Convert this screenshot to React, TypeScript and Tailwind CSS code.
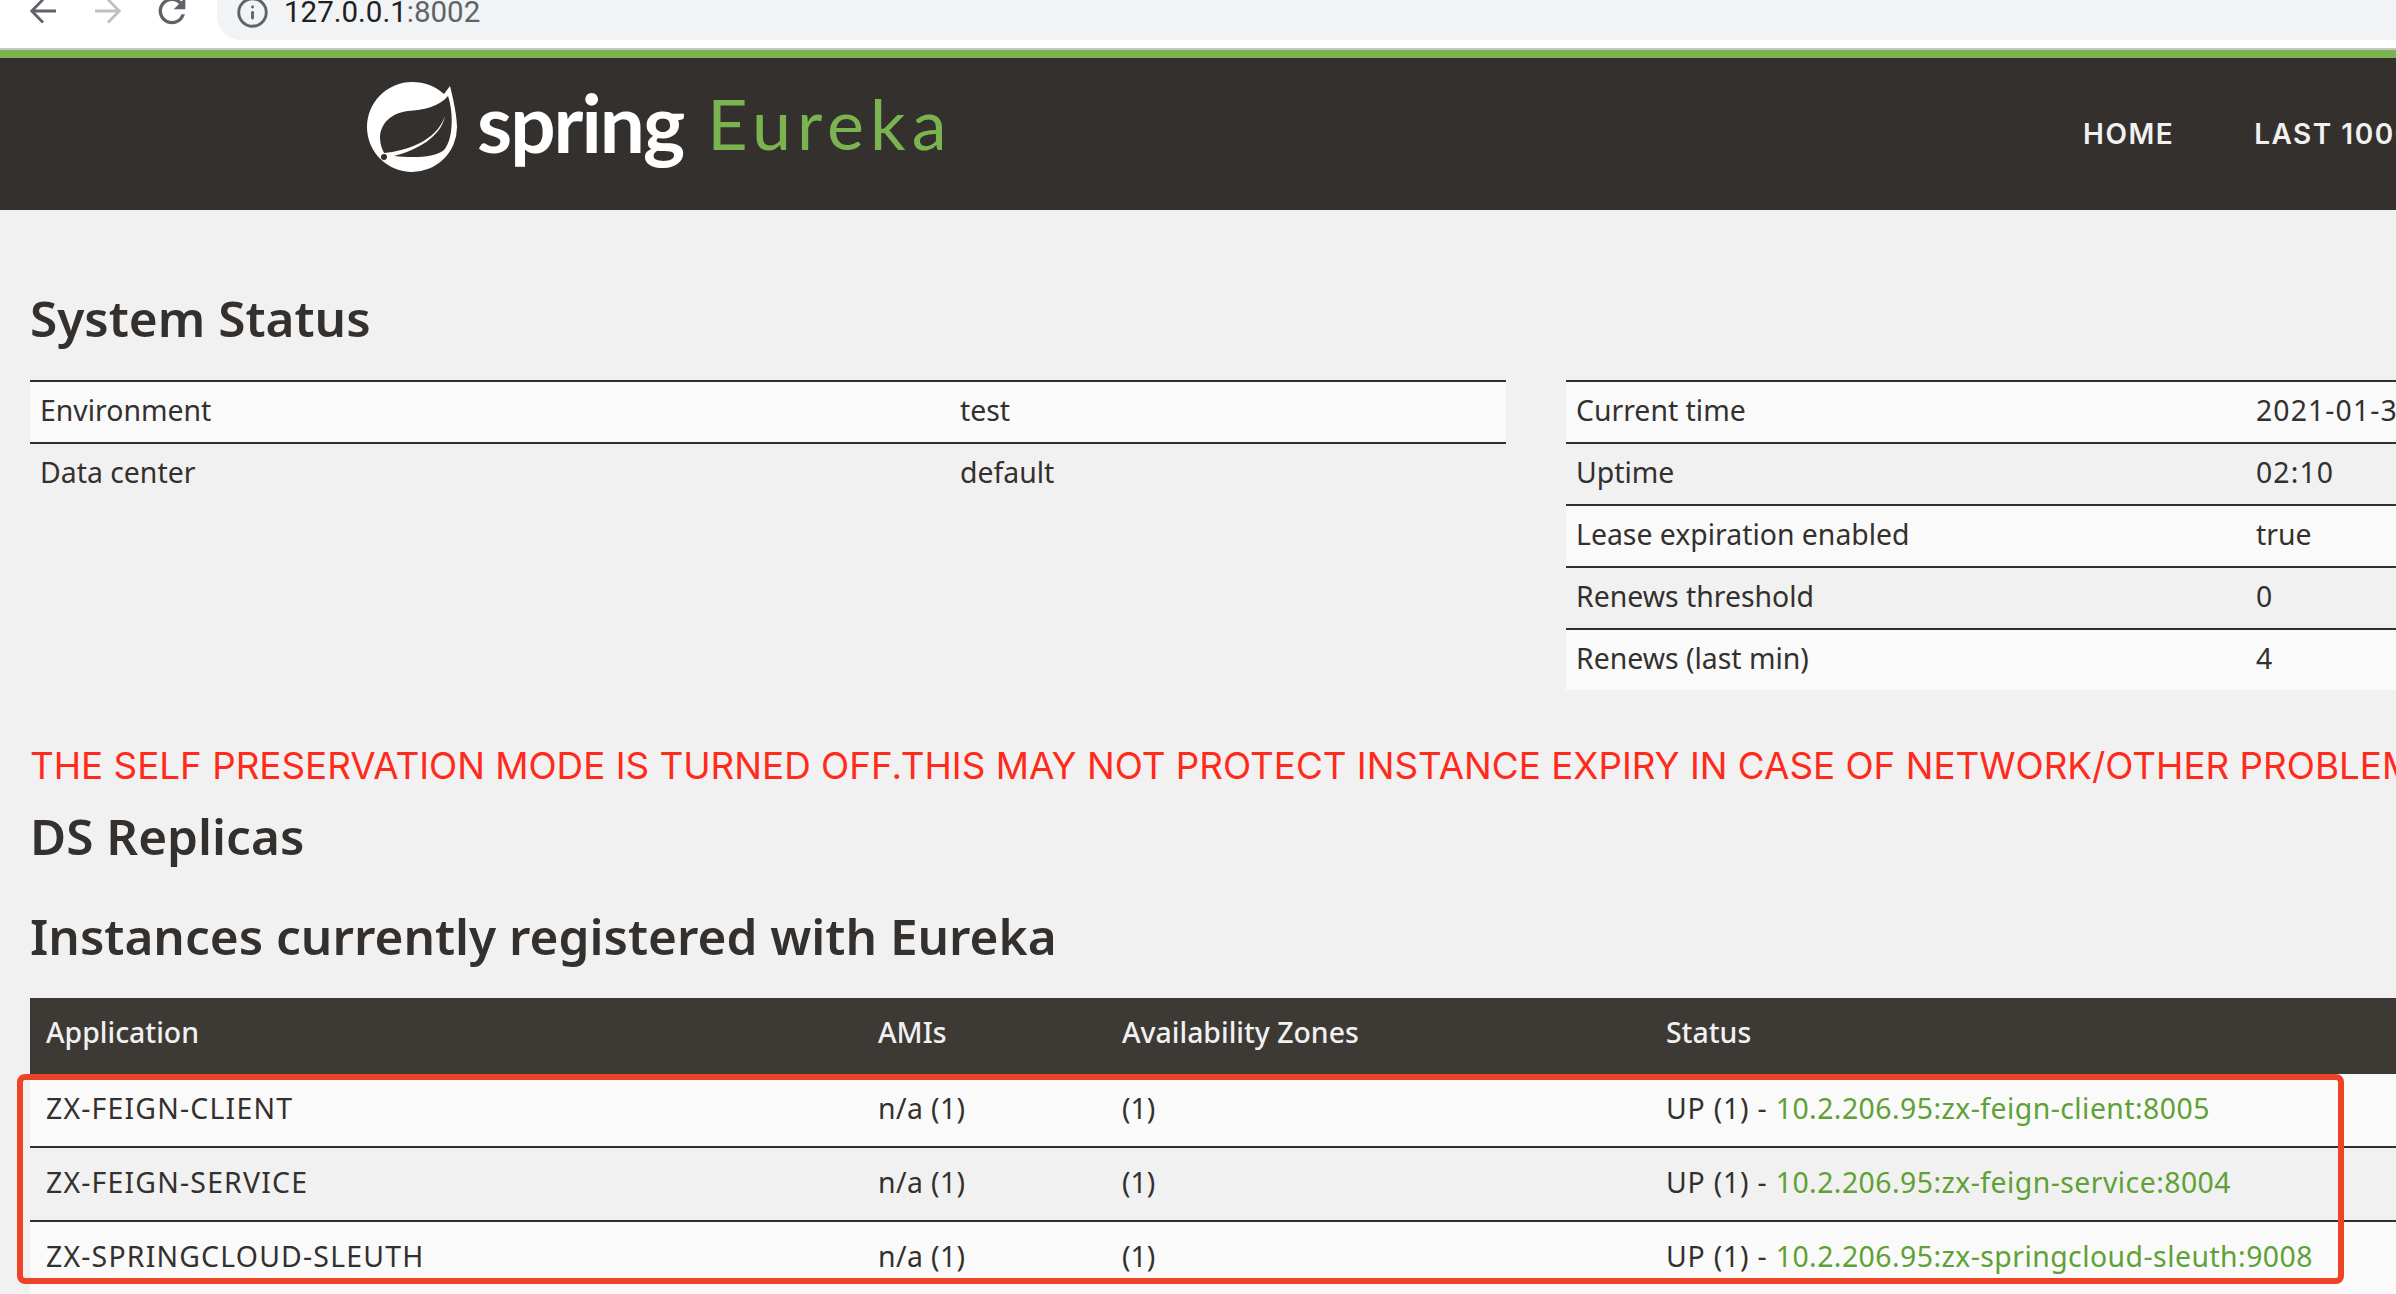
import { Info } from 'lucide-react';

const leftRows = [
  ['Environment', 'test'],
  ['Data center', 'default'],
];

const rightRows = [
  ['Current time', '2021-01-31T15:37:12 +0800'],
  ['Uptime', '02:10'],
  ['Lease expiration enabled', 'true'],
  ['Renews threshold', '0'],
  ['Renews (last min)', '4'],
];

const instances = [
  ['ZX-FEIGN-CLIENT', '10.2.206.95:zx-feign-client:8005'],
  ['ZX-FEIGN-SERVICE', '10.2.206.95:zx-feign-service:8004'],
  ['ZX-SPRINGCLOUD-SLEUTH', '10.2.206.95:zx-springcloud-sleuth:9008'],
];

const BrowserBar = () => (
  <div className="flex h-[48px] items-start overflow-hidden bg-white">
    <div className="flex w-[217px] shrink-0 items-start pl-[30px]">
      <svg className="-mt-[2px] h-[26px] w-[26px]" viewBox="0 0 26 26" fill="none" stroke="#5f6368" strokeWidth="2.8">
        <path d="M26 13H2M13 1.500L1.800 13 13 24.500" />
      </svg>
      <svg className="-mt-[2px] ml-[39px] h-[26px] w-[26px]" viewBox="0 0 26 26" fill="none" stroke="#bdc1c6" strokeWidth="2.8">
        <path d="M0 13H24M13 1.500L24.200 13 13 24.500" />
      </svg>
      <svg className="-mt-[9px] ml-[31px] h-[40px] w-[40px] shrink-0" viewBox="0 0 24 24" fill="#5f6368">
        <path d="M17.65 6.35A7.95 7.95 0 0 0 12 4C7.58 4 4 7.58 4 12s3.58 8 8 8c3.73 0 6.84-2.55 7.73-6h-2.08A5.99 5.99 0 0 1 12 18c-3.31 0-6-2.69-6-6s2.69-6 6-6c1.66 0 3.14.69 4.22 1.78L13 11h7V4l-2.35 2.35z" />
      </svg>
    </div>
    <div className="flex h-[40px] flex-1 items-start rounded-bl-[24px] bg-[#f1f3f4] pl-[19px]">
      <Info className="-mt-[4px]" size={33} color="#5f6368" strokeWidth={2.1} />
      <span className="-mt-[9px] ml-[15px] font-['Roboto',sans-serif] text-[29.5px] leading-[42px] text-[#202124]">
        127.0.0.1<span className="text-[#5f6368]">:8002</span>
      </span>
    </div>
  </div>
);

const SpringLeaf = () => (
  <svg className="h-[90px] w-[90px] shrink-0" viewBox="0 0 90 90">
    <path fill="#ffffff" d="M83 4 C85 12 90 32 90 45 A45 45 0 1 1 45 0 C58 0 68 4 77 12 Z" />
    <path
      fill="#34302d"
      d="M81 14 C72 25 56 28 41 29 C24 31 13 42 13 56 C13 62 15 67 17 71 C38 69 69 60 78 34 C74 55 50 68 27 74 C45 76 68 76 77 68 C86 58 87 32 81 14 Z"
    />
    <circle cx="17" cy="75" r="3" fill="#34302d" />
  </svg>
);

const Navbar = () => (
  <div className="flex h-[152px] items-start overflow-hidden bg-[#34302d]">
    <div className="ml-[367px] mt-[24px] flex w-[1716px] shrink-0 items-center">
      <SpringLeaf />
      <span className="-mt-[11px] ml-[20px] font-['Lato',sans-serif] text-[80px] font-bold leading-[90px] tracking-[-2px] text-white">
        spring
      </span>
      <span className="-mt-[9px] ml-[24px] font-['Lato',sans-serif] text-[70px] leading-[90px] tracking-[6px] text-[#7cb351]">
        Eureka
      </span>
    </div>
    <nav className="mt-[60px] flex shrink-0 gap-[80px] font-['Inter',sans-serif] text-[28px] font-semibold leading-[32px] tracking-[1.5px] text-[#f1f1f1]">
      <span>HOME</span>
      <span className="whitespace-nowrap">LAST 1000 SINCE STARTUP</span>
    </nav>
  </div>
);

const Heading = ({ children, className }: { children: string; className: string }) => (
  <h2 className={`font-['Noto_Sans',sans-serif] text-[49.5px] font-semibold leading-[60px] text-[#34302d] ${className}`}>
    {children}
  </h2>
);

const StatusTable = ({ rows, labelWidth }: { rows: string[][]; labelWidth: string }) => (
  <div className="w-[1476px] shrink-0">
    {rows.map((row, i) => (
      <div
        key={row[0]}
        className={`flex h-[62px] items-center border-t-2 border-[#34302d] pb-[4px] pl-[10px] ${i % 2 === 0 ? 'bg-[#fafafa]' : ''}`}
      >
        <span className={`shrink-0 ${labelWidth}`}>{row[0]}</span>
        <span className={`whitespace-nowrap ${/^\d\d/.test(row[1]) ? 'tracking-[1.1px]' : ''}`}>{row[1]}</span>
      </div>
    ))}
  </div>
);

export default function App() {
  return (
    <div className="relative h-[1294px] w-[2396px] overflow-hidden bg-[#f1f1f1] font-['Noto_Sans',sans-serif] text-[28.4px] text-[#34302d]">
      <BrowserBar />
      <div className="h-[2px] bg-[#c8c9c7]" />
      <div className="h-[8px] bg-[#7cb351]" />
      <Navbar />

      <main className="pl-[30px]">
        <Heading className="mt-[78px] mb-[32px]">System Status</Heading>

        <div className="flex items-start gap-[60px]">
          <StatusTable rows={leftRows} labelWidth="w-[920px]" />
          <StatusTable rows={rightRows} labelWidth="w-[680px]" />
        </div>

        <p className="mt-[46px] whitespace-nowrap font-['Inter',sans-serif] text-[36.8px] leading-[60px] text-[#ff2a1a]">
          THE SELF PRESERVATION MODE IS TURNED OFF.THIS MAY NOT PROTECT INSTANCE EXPIRY IN CASE OF NETWORK/OTHER PROBLEMS.
        </p>

        <Heading className="mt-[10px]">DS Replicas</Heading>
        <Heading className="mt-[40px]">Instances currently registered with Eureka</Heading>

        <div className="mt-[32px]">
          <div className="flex h-[76px] items-center bg-[#3d3a35] pb-[8px] pl-[16px] font-medium text-[#f1f1f1]">
            <span className="w-[832px]">Application</span>
            <span className="w-[244px]">AMIs</span>
            <span className="w-[544px]">Availability Zones</span>
            <span>Status</span>
          </div>
          {instances.map((row, i) => (
            <div
              key={row[0]}
              className={`flex items-center pb-[4px] pl-[16px] ${i % 2 === 0 ? 'bg-[#fafafa]' : ''} ${i > 0 ? 'h-[74px] border-t-2 border-[#34302d]' : 'h-[72px]'}`}
            >
              <span className="w-[832px] tracking-[1.2px]">{row[0]}</span>
              <span className="w-[244px] tracking-[0.4px]">n/a (1)</span>
              <span className="w-[544px]">(1)</span>
              <span className="tracking-[0.8px]">
                UP (1) - <a className="tracking-[0.45px] text-[#5fa134]">{row[1]}</a>
              </span>
            </div>
          ))}
        </div>
      </main>

      {/* annotation drawn over the screenshot */}
      <div className="absolute left-[17px] top-[1074px] h-[210px] w-[2327px] rounded-[8px] border-[6px] border-[#ef4328]" />
    </div>
  );
}
